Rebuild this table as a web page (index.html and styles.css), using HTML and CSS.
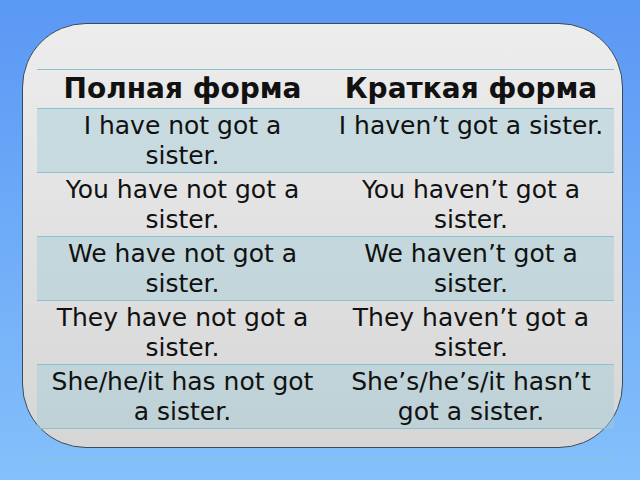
FILE: index.html
```html
<!DOCTYPE html>
<html lang="ru">
<head>
<meta charset="utf-8">
<title>Полная и краткая форма</title>
<link rel="stylesheet" href="styles.css">
</head>
<body>
<div class="card">
  <div class="table">
    <div class="row head">
      <div class="cell">Полная форма</div>
      <div class="cell">Краткая форма</div>
    </div>
    <div class="row shade">
      <div class="cell">I have not got a sister.</div>
      <div class="cell">I haven’t got a sister.</div>
    </div>
    <div class="row">
      <div class="cell">You have not got a sister.</div>
      <div class="cell">You haven’t got a sister.</div>
    </div>
    <div class="row shade">
      <div class="cell">We have not got a sister.</div>
      <div class="cell">We haven’t got a sister.</div>
    </div>
    <div class="row">
      <div class="cell">They have not got a sister.</div>
      <div class="cell">They haven’t got a sister.</div>
    </div>
    <div class="row shade">
      <div class="cell">She/he/it has not got a sister.</div>
      <div class="cell">She’s/he’s/it hasn’t got a sister.</div>
    </div>
    <div class="row empty">
      <div class="cell"></div>
      <div class="cell"></div>
    </div>
  </div>
</div>
</body>
</html>
```
FILE: styles.css
```css
html, body {
  margin: 0;
  padding: 0;
}
body {
  width: 640px;
  height: 480px;
  overflow: hidden;
  background: linear-gradient(#5a98f5, #84c0fa);
  font-family: "DejaVu Sans", sans-serif;
  color: #111;
}
.card {
  box-sizing: border-box;
  margin: 23px 0 0 22px;
  width: 601px;
  height: 425px;
  border: 1.5px solid #3c4a58;
  border-radius: 64px;
  background: linear-gradient(#ededed, #d6d6d6);
  padding: 45px 0 0 13.5px;
}
.table {
  width: 577px;
  display: flex;
  flex-direction: column;
}
.row {
  display: grid;
  grid-template-columns: 292px 285px;
  height: 64px;
  border-top: 1px solid #8cc2cf;
  box-sizing: border-box;
}
.row.head {
  height: 39px;
  align-items: center;
}
.row.shade {
  background: rgba(160, 205, 215, 0.45);
}
.row.empty {
  height: 31px;
  border-bottom: 1px solid #8cc2cf;
}
.cell {
  text-align: center;
  font-size: 25px;
  line-height: 30px;
  padding: 2px 10px 0;
}
.head .cell {
  font-size: 28px;
  font-weight: bold;
  padding-top: 0;
  line-height: 34px;
}
```
